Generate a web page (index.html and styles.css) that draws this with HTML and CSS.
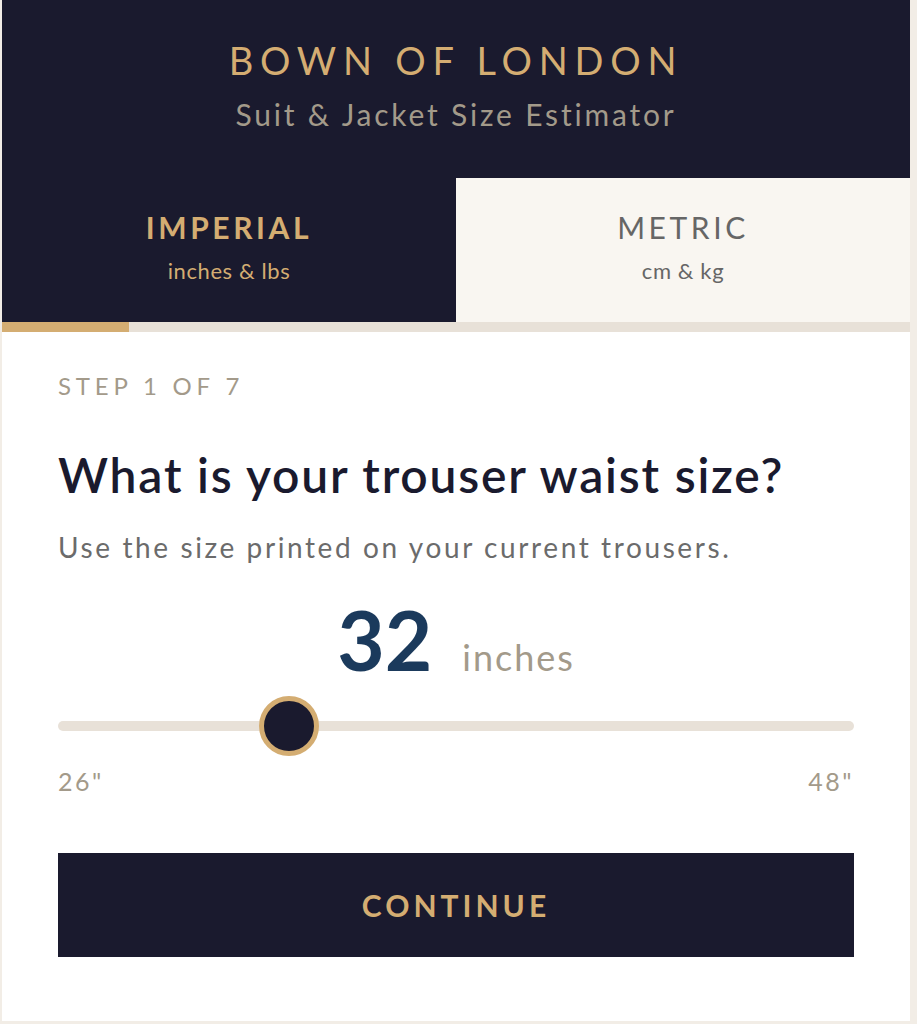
FILE: index.html
```html
<!DOCTYPE html>
<html lang="en">
<head>
    <meta charset="UTF-8">
    <meta name="viewport" content="width=device-width, initial-scale=1.0">
    <title>Suit &amp; Jacket Size Estimator</title>
    <link rel="stylesheet" href="styles.css">
</head>
<body>
    <div class="app">
        <header class="header">
            <div class="brand">BOWN OF LONDON</div>
            <div class="tagline">Suit &amp; Jacket Size Estimator</div>
        </header>

        <div class="tabs">
            <button class="tab active" type="button">
                <span class="tab-title">IMPERIAL</span>
                <span class="tab-sub">inches &amp; lbs</span>
            </button>
            <button class="tab" type="button">
                <span class="tab-title">METRIC</span>
                <span class="tab-sub">cm &amp; kg</span>
            </button>
        </div>

        <div class="progress">
            <div class="progress-fill" style="width: 14%;"></div>
        </div>

        <main class="content">
            <div class="step">STEP 1 OF 7</div>
            <h1 class="question">What is your trouser waist size?</h1>
            <p class="hint">Use the size printed on your current trousers.</p>

            <div class="value">
                <span class="value-num" id="waistValue">32</span>
                <span class="value-unit">inches</span>
            </div>

            <input class="range" type="range" id="waist" min="26" max="48" value="32">
            <div class="range-labels">
                <span>26"</span>
                <span>48"</span>
            </div>

            <button class="continue" type="button">CONTINUE</button>
        </main>
    </div>

    <script>
        // update angka saat slider digeser
        const waist = document.getElementById("waist");
        waist.addEventListener("input", function () {
            document.getElementById("waistValue").textContent = waist.value;
        });
    </script>
</body>
</html>
```

FILE: styles.css
```css
body {
    margin: 0;
    padding: 0;
    background-color: #f2ede6;
    font-family: Lato, "Open Sans", sans-serif;
}
.app {
    width: 908px;
    margin-left: 2px;
    background-color: #fff;
    padding-bottom: 1px;
}
.header {
    background-color: #1a1a2e;
    text-align: center;
    padding: 38px 0 46px;
}
.brand {
    color: #d4ad72;
    font-size: 38px;
    line-height: 44px;
    letter-spacing: 6.8px;
}
.tagline {
    color: #a39a8a;
    font-size: 30px;
    line-height: 36px;
    letter-spacing: 2.8px;
    margin-top: 14px;
}
.tabs {
    display: flex;
}
.tab {
    flex: 1;
    height: 144px;
    border: none;
    background-color: #f9f6f1;
    color: #666;
    font-family: inherit;
    display: flex;
    flex-direction: column;
    align-items: center;
    justify-content: flex-start;
    gap: 14px;
    padding: 32px 0 0;
    cursor: pointer;
}
.tab.active {
    background-color: #1a1a2e;
    color: #d4ad72;
}
.tab-title {
    font-size: 30px;
    line-height: 34px;
    letter-spacing: 3.6px;
}
.tab.active .tab-title {
    font-weight: bold;
}
.tab-sub {
    font-size: 22px;
    line-height: 26px;
    letter-spacing: 0.6px;
}
.progress {
    height: 10px;
    background-color: #e8e1d8;
}
.progress-fill {
    height: 100%;
    background-color: #d4ad72;
}
.content {
    padding: 39px 56px 63px;
}
.step {
    color: #a39a8a;
    font-size: 24px;
    line-height: 30px;
    letter-spacing: 4.8px;
}
.question {
    margin: 46px 0 0;
    color: #1a1a2e;
    font-size: 48px;
    line-height: 56px;
    font-weight: 600;
    letter-spacing: 1.8px;
}
.hint {
    margin: 27px 0 0;
    color: #6b6b6b;
    font-size: 28px;
    line-height: 34px;
    letter-spacing: 2.6px;
}
.value {
    display: flex;
    justify-content: center;
    align-items: baseline;
    gap: 30px;
    margin-top: 30px;
}
.value-num {
    color: #1b3a5c;
    font-size: 82px;
    line-height: 90px;
    font-weight: bold;
}
.value-unit {
    color: #a39a8a;
    font-size: 36px;
    letter-spacing: 2px;
}
.range {
    -webkit-appearance: none;
    appearance: none;
    display: block;
    width: 100%;
    height: 10px;
    margin: 37px 0 0;
    background-color: #e8e1d8;
    border-radius: 5px;
    outline: none;
}
.range::-webkit-slider-runnable-track {
    height: 10px;
    border-radius: 5px;
    background: transparent;
}
.range::-webkit-slider-thumb {
    -webkit-appearance: none;
    width: 60px;
    height: 60px;
    margin-top: -25px;
    box-sizing: border-box;
    border-radius: 50%;
    border: 5px solid #d4ad72;
    background-color: #1a1a2e;
    cursor: pointer;
}
.range-labels {
    display: flex;
    justify-content: space-between;
    margin-top: 35px;
    color: #a39a8a;
    font-size: 25px;
    line-height: 30px;
    letter-spacing: 2.5px;
}
.continue {
    display: block;
    width: 100%;
    height: 104px;
    margin-top: 57px;
    border: none;
    background-color: #1a1a2e;
    color: #d4ad72;
    font-family: inherit;
    font-size: 30px;
    font-weight: bold;
    letter-spacing: 4px;
    cursor: pointer;
}
.continue:hover {
    opacity: 0.95;
}
```
